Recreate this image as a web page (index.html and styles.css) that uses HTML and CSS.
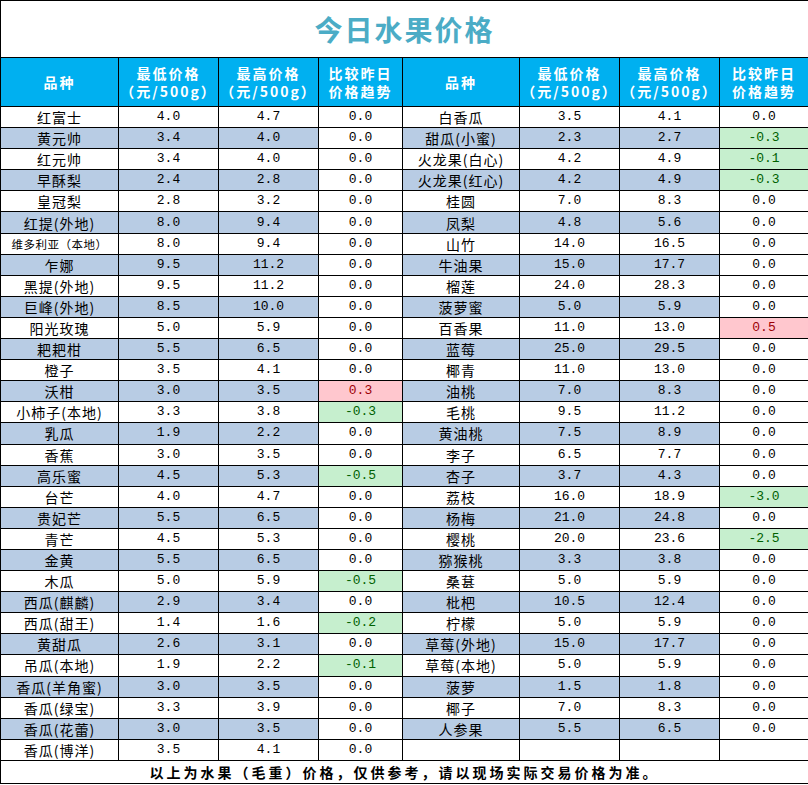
FILE: index.html
```html
<!DOCTYPE html>
<html lang="zh-CN">
<head>
<meta charset="utf-8">
<title>今日水果价格</title>
<link rel="stylesheet" href="styles.css">
</head>
<body>
<table class="sheet">
  <colgroup>
    <col class="c-name"><col class="c-num"><col class="c-num"><col class="c-trend">
    <col class="c-name2"><col class="c-num"><col class="c-num"><col class="c-trend2">
  </colgroup>
  <thead>
    <tr class="title-row"><th colspan="8" class="title">今日水果价格</th></tr>
    <tr class="head-row">
      <th>品种</th>
      <th>最低价格<br>（元/500g）</th>
      <th>最高价格<br>（元/500g）</th>
      <th>比较昨日<br>价格趋势</th>
      <th>品种</th>
      <th>最低价格<br>（元/500g）</th>
      <th>最高价格<br>（元/500g）</th>
      <th>比较昨日<br>价格趋势</th>
    </tr>
  </thead>
  <tbody>
    <tr><td class="name">红富士</td><td class="num">4.0</td><td class="num">4.7</td><td class="trend">0.0</td><td class="name">白香瓜</td><td class="num">3.5</td><td class="num">4.1</td><td class="trend">0.0</td></tr>
    <tr class="alt"><td class="name">黄元帅</td><td class="num">3.4</td><td class="num">4.0</td><td class="trend">0.0</td><td class="name">甜瓜(小蜜)</td><td class="num">2.3</td><td class="num">2.7</td><td class="trend down">-0.3</td></tr>
    <tr><td class="name">红元帅</td><td class="num">3.4</td><td class="num">4.0</td><td class="trend">0.0</td><td class="name">火龙果(白心)</td><td class="num">4.2</td><td class="num">4.9</td><td class="trend down">-0.1</td></tr>
    <tr class="alt"><td class="name">早酥梨</td><td class="num">2.4</td><td class="num">2.8</td><td class="trend">0.0</td><td class="name">火龙果(红心)</td><td class="num">4.2</td><td class="num">4.9</td><td class="trend down">-0.3</td></tr>
    <tr><td class="name">皇冠梨</td><td class="num">2.8</td><td class="num">3.2</td><td class="trend">0.0</td><td class="name">桂圆</td><td class="num">7.0</td><td class="num">8.3</td><td class="trend">0.0</td></tr>
    <tr class="alt"><td class="name">红提(外地)</td><td class="num">8.0</td><td class="num">9.4</td><td class="trend">0.0</td><td class="name">凤梨</td><td class="num">4.8</td><td class="num">5.6</td><td class="trend">0.0</td></tr>
    <tr><td class="name small">维多利亚（本地）</td><td class="num">8.0</td><td class="num">9.4</td><td class="trend">0.0</td><td class="name">山竹</td><td class="num">14.0</td><td class="num">16.5</td><td class="trend">0.0</td></tr>
    <tr class="alt"><td class="name">乍娜</td><td class="num">9.5</td><td class="num">11.2</td><td class="trend">0.0</td><td class="name">牛油果</td><td class="num">15.0</td><td class="num">17.7</td><td class="trend">0.0</td></tr>
    <tr><td class="name">黑提(外地)</td><td class="num">9.5</td><td class="num">11.2</td><td class="trend">0.0</td><td class="name">榴莲</td><td class="num">24.0</td><td class="num">28.3</td><td class="trend">0.0</td></tr>
    <tr class="alt"><td class="name">巨峰(外地)</td><td class="num">8.5</td><td class="num">10.0</td><td class="trend">0.0</td><td class="name">菠萝蜜</td><td class="num">5.0</td><td class="num">5.9</td><td class="trend">0.0</td></tr>
    <tr><td class="name">阳光玫瑰</td><td class="num">5.0</td><td class="num">5.9</td><td class="trend">0.0</td><td class="name">百香果</td><td class="num">11.0</td><td class="num">13.0</td><td class="trend up">0.5</td></tr>
    <tr class="alt"><td class="name">耙耙柑</td><td class="num">5.5</td><td class="num">6.5</td><td class="trend">0.0</td><td class="name">蓝莓</td><td class="num">25.0</td><td class="num">29.5</td><td class="trend">0.0</td></tr>
    <tr><td class="name">橙子</td><td class="num">3.5</td><td class="num">4.1</td><td class="trend">0.0</td><td class="name">椰青</td><td class="num">11.0</td><td class="num">13.0</td><td class="trend">0.0</td></tr>
    <tr class="alt"><td class="name">沃柑</td><td class="num">3.0</td><td class="num">3.5</td><td class="trend up">0.3</td><td class="name">油桃</td><td class="num">7.0</td><td class="num">8.3</td><td class="trend">0.0</td></tr>
    <tr><td class="name">小柿子(本地)</td><td class="num">3.3</td><td class="num">3.8</td><td class="trend down">-0.3</td><td class="name">毛桃</td><td class="num">9.5</td><td class="num">11.2</td><td class="trend">0.0</td></tr>
    <tr class="alt"><td class="name">乳瓜</td><td class="num">1.9</td><td class="num">2.2</td><td class="trend">0.0</td><td class="name">黄油桃</td><td class="num">7.5</td><td class="num">8.9</td><td class="trend">0.0</td></tr>
    <tr><td class="name">香蕉</td><td class="num">3.0</td><td class="num">3.5</td><td class="trend">0.0</td><td class="name">李子</td><td class="num">6.5</td><td class="num">7.7</td><td class="trend">0.0</td></tr>
    <tr class="alt"><td class="name">高乐蜜</td><td class="num">4.5</td><td class="num">5.3</td><td class="trend down">-0.5</td><td class="name">杏子</td><td class="num">3.7</td><td class="num">4.3</td><td class="trend">0.0</td></tr>
    <tr><td class="name">台芒</td><td class="num">4.0</td><td class="num">4.7</td><td class="trend">0.0</td><td class="name">荔枝</td><td class="num">16.0</td><td class="num">18.9</td><td class="trend down">-3.0</td></tr>
    <tr class="alt"><td class="name">贵妃芒</td><td class="num">5.5</td><td class="num">6.5</td><td class="trend">0.0</td><td class="name">杨梅</td><td class="num">21.0</td><td class="num">24.8</td><td class="trend">0.0</td></tr>
    <tr><td class="name">青芒</td><td class="num">4.5</td><td class="num">5.3</td><td class="trend">0.0</td><td class="name">樱桃</td><td class="num">20.0</td><td class="num">23.6</td><td class="trend down">-2.5</td></tr>
    <tr class="alt"><td class="name">金黄</td><td class="num">5.5</td><td class="num">6.5</td><td class="trend">0.0</td><td class="name">猕猴桃</td><td class="num">3.3</td><td class="num">3.8</td><td class="trend">0.0</td></tr>
    <tr><td class="name">木瓜</td><td class="num">5.0</td><td class="num">5.9</td><td class="trend down">-0.5</td><td class="name">桑葚</td><td class="num">5.0</td><td class="num">5.9</td><td class="trend">0.0</td></tr>
    <tr class="alt"><td class="name">西瓜(麒麟)</td><td class="num">2.9</td><td class="num">3.4</td><td class="trend">0.0</td><td class="name">枇杷</td><td class="num">10.5</td><td class="num">12.4</td><td class="trend">0.0</td></tr>
    <tr><td class="name">西瓜(甜王)</td><td class="num">1.4</td><td class="num">1.6</td><td class="trend down">-0.2</td><td class="name">柠檬</td><td class="num">5.0</td><td class="num">5.9</td><td class="trend">0.0</td></tr>
    <tr class="alt"><td class="name">黄甜瓜</td><td class="num">2.6</td><td class="num">3.1</td><td class="trend">0.0</td><td class="name">草莓(外地)</td><td class="num">15.0</td><td class="num">17.7</td><td class="trend">0.0</td></tr>
    <tr><td class="name">吊瓜(本地)</td><td class="num">1.9</td><td class="num">2.2</td><td class="trend down">-0.1</td><td class="name">草莓(本地)</td><td class="num">5.0</td><td class="num">5.9</td><td class="trend">0.0</td></tr>
    <tr class="alt"><td class="name">香瓜(羊角蜜)</td><td class="num">3.0</td><td class="num">3.5</td><td class="trend">0.0</td><td class="name">菠萝</td><td class="num">1.5</td><td class="num">1.8</td><td class="trend">0.0</td></tr>
    <tr><td class="name">香瓜(绿宝)</td><td class="num">3.3</td><td class="num">3.9</td><td class="trend">0.0</td><td class="name">椰子</td><td class="num">7.0</td><td class="num">8.3</td><td class="trend">0.0</td></tr>
    <tr class="alt"><td class="name">香瓜(花蕾)</td><td class="num">3.0</td><td class="num">3.5</td><td class="trend">0.0</td><td class="name">人参果</td><td class="num">5.5</td><td class="num">6.5</td><td class="trend">0.0</td></tr>
    <tr><td class="name">香瓜(博洋)</td><td class="num">3.5</td><td class="num">4.1</td><td class="trend">0.0</td><td class="name"></td><td class="num"></td><td class="num"></td><td class="trend"></td></tr>
  </tbody>
  <tfoot>
    <tr class="foot-row"><td colspan="8" class="foot">以上为水果（毛重）价格，仅供参考，请以现场实际交易价格为准。</td></tr>
  </tfoot>
</table>
</body>
</html>
```

FILE: styles.css
```css
html, body {
  margin: 0;
  padding: 0;
  background: #ffffff;
}

.sheet {
  border-collapse: collapse;
  table-layout: fixed;
  width: 808px;
  font-family: "Noto Sans CJK SC", "Noto Sans", sans-serif;
  color: #000;
}

.c-name { width: 118px; }
.c-num { width: 100px; }
.c-trend { width: 84px; }
.c-name2 { width: 117px; }
.c-trend2 { width: 89px; }

.sheet th,
.sheet td {
  border: 1px solid #000;
  padding: 0;
  text-align: center;
  vertical-align: middle;
  overflow: hidden;
  white-space: nowrap;
}

.title-row { height: 57px; }
.title {
  color: #4bacc6;
  font-size: 28px;
  font-weight: 700;
  letter-spacing: 2px;
  background: #fff;
}

.head-row { height: 49px; }
.head-row th {
  background: #00b0f0;
  color: #fff;
  font-size: 14px;
  font-weight: 700;
  letter-spacing: 2px;
  line-height: 18px;
}

tbody tr { height: 21.1px; }

.name {
  font-size: 14px;
  letter-spacing: 1px;
  line-height: 18px;
}
.name.small {
  font-size: 11.5px;
  letter-spacing: 0.5px;
}

.num,
.trend {
  font-family: "Liberation Mono", "DejaVu Sans Mono", monospace;
  font-size: 13px;
  line-height: 18px;
}

tr.alt .name,
tr.alt .num {
  background: #b8cce4;
}

.trend.down {
  background: #c6efce;
  color: #006100;
}
.trend.up {
  background: #ffc7ce;
  color: #9c0006;
}

.foot-row { height: 23px; }
.foot {
  font-size: 14px;
  font-weight: 700;
  letter-spacing: 3px;
  line-height: 18px;
}
```
